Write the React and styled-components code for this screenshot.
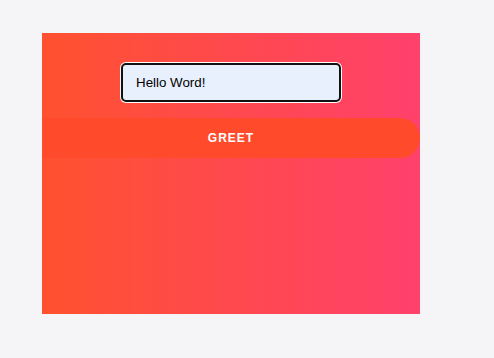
import { useEffect, useRef, useState } from "react";
import styled, { createGlobalStyle } from "styled-components";

const GlobalStyle = createGlobalStyle`
  body {
    margin: 0;
    background: #f5f5f7;
    font-family: "Liberation Sans", Arial, sans-serif;
  }
`;

const Panel = styled.div`
  margin: 33px 0 0 42px;
  width: 378px;
  height: 281px;
  padding-top: 30px;
  box-sizing: border-box;
  background: linear-gradient(to right, #ff512f, #ff416c);
  display: flex;
  flex-direction: column;
  align-items: center;
  gap: 16px;
  overflow: hidden;
`;

const Field = styled.input`
  width: 220px;
  height: 39px;
  box-sizing: border-box;
  padding: 0 13px;
  border: 2px solid #111;
  border-radius: 5px;
  box-shadow: 0 0 0 1px #fff;
  outline: none;
  background: #e8f0fe;
  color: #000;
  font-family: "Liberation Sans", Arial, sans-serif;
  font-size: 13.33px;
  caret-color: #000;
`;

const GreetButton = styled.button`
  align-self: stretch;
  height: 40px;
  border: none;
  border-radius: 0 20px 20px 0;
  background: #ff4b2b;
  color: #fff;
  font-family: "Liberation Sans", Arial, sans-serif;
  font-size: 12px;
  font-weight: bold;
  letter-spacing: 1px;
  text-transform: uppercase;
  cursor: pointer;
`;

export default function App() {
  const [name, setName] = useState("Hello Word!");
  const fieldRef = useRef(null);

  useEffect(() => {
    const el = fieldRef.current;
    if (el) {
      el.focus();
      el.setSelectionRange(el.value.length, el.value.length);
    }
  }, []);

  return (
    <>
      <GlobalStyle />
      <Panel>
        <Field ref={fieldRef} value={name} onChange={(e) => setName(e.target.value)} />
        <GreetButton onClick={() => alert(name)}>Greet</GreetButton>
      </Panel>
    </>
  );
}
